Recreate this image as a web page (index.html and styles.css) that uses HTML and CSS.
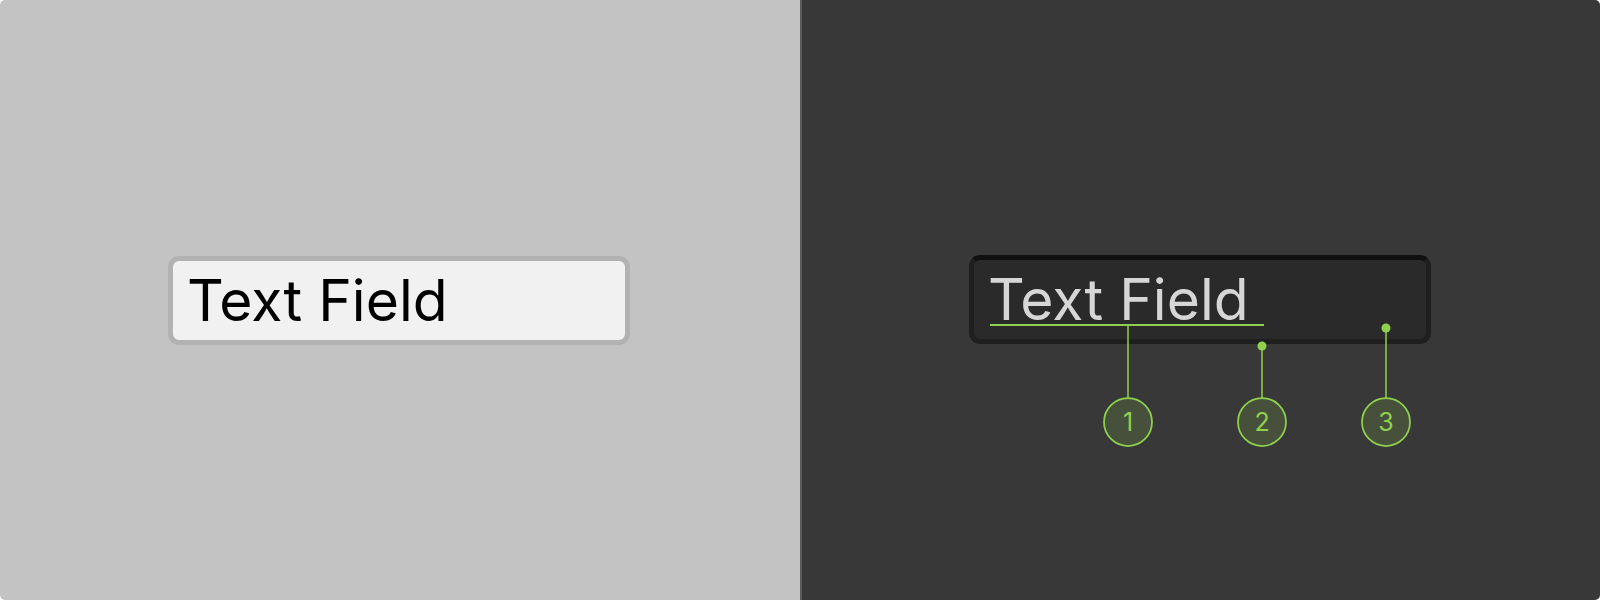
FILE: index.html
```html
<!DOCTYPE html>
<html lang="en">
<head>
    <meta charset="UTF-8">
    <meta name="viewport" content="width=device-width, initial-scale=1.0">
    <title>Text Field Anatomy</title>
    <link rel="stylesheet" href="styles.css">
</head>
<body>
    <div class="frame">
        <div class="pane pane-light">
            <div class="field field-light">Text Field</div>
        </div>
        <div class="pane pane-dark">
            <div class="field field-dark">Text Field</div>
        </div>

        <!-- callouts for the dark field -->
        <svg class="callouts" width="1600" height="600" viewBox="0 0 1600 600">
            <rect x="990" y="324" width="274" height="2" fill="#8fd14f"/>
            <line x1="1128" y1="325" x2="1128" y2="398" stroke="#8fd14f" stroke-width="1.5"/>
            <line x1="1262" y1="346" x2="1262" y2="398" stroke="#8fd14f" stroke-width="1.5"/>
            <line x1="1386" y1="328" x2="1386" y2="398" stroke="#8fd14f" stroke-width="1.5"/>
            <circle cx="1262" cy="346" r="4.5" fill="#8fd14f"/>
            <circle cx="1386" cy="328" r="4.5" fill="#8fd14f"/>

            <g class="badge">
                <circle cx="1128" cy="422" r="24"/>
                <text x="1128" y="431">1</text>
            </g>
            <g class="badge">
                <circle cx="1262" cy="422" r="24"/>
                <text x="1262" y="431">2</text>
            </g>
            <g class="badge">
                <circle cx="1386" cy="422" r="24"/>
                <text x="1386" y="431">3</text>
            </g>
        </svg>
    </div>
</body>
</html>
```

FILE: styles.css
```css
body {
    margin: 0;
    font-family: Inter, "Noto Sans", sans-serif;
    background: #ffffff;
}
.frame {
    position: relative;
    display: flex;
    width: 1600px;
    height: 600px;
    border-radius: 5px;
    overflow: hidden;
}
.pane {
    width: 800px;
    box-sizing: border-box;
    padding-top: 256px;
}
.pane-light {
    background: #c3c3c3;
    padding-left: 168px;
}
.pane-dark {
    background: #383838;
    border-left: 2px solid #5b5b5b;
    padding-left: 167px;
    padding-top: 255px;
}
.field {
    width: 462px;
    height: 89px;
    box-sizing: border-box;
    border: 5px solid;
    border-radius: 11px;
    padding-left: 14px;
    font-size: 57px;
    line-height: 79px;
    white-space: nowrap;
}
.field-light {
    background: #f1f1f1;
    border-color: #b2b2b2;
    color: #000000;
}
.field-dark {
    background: #2a2a2a;
    border-color: #1f1f1f;
    border-top-color: #101010;
    color: #d6d6d6;
}
.callouts {
    position: absolute;
    left: 0;
    top: 0;
}
.badge circle {
    fill: #46503a;
    stroke: #8fd14f;
    stroke-width: 1.75;
}
.badge text {
    fill: #8fd14f;
    font-family: Inter, sans-serif;
    font-size: 25px;
    text-anchor: middle;
}
```
